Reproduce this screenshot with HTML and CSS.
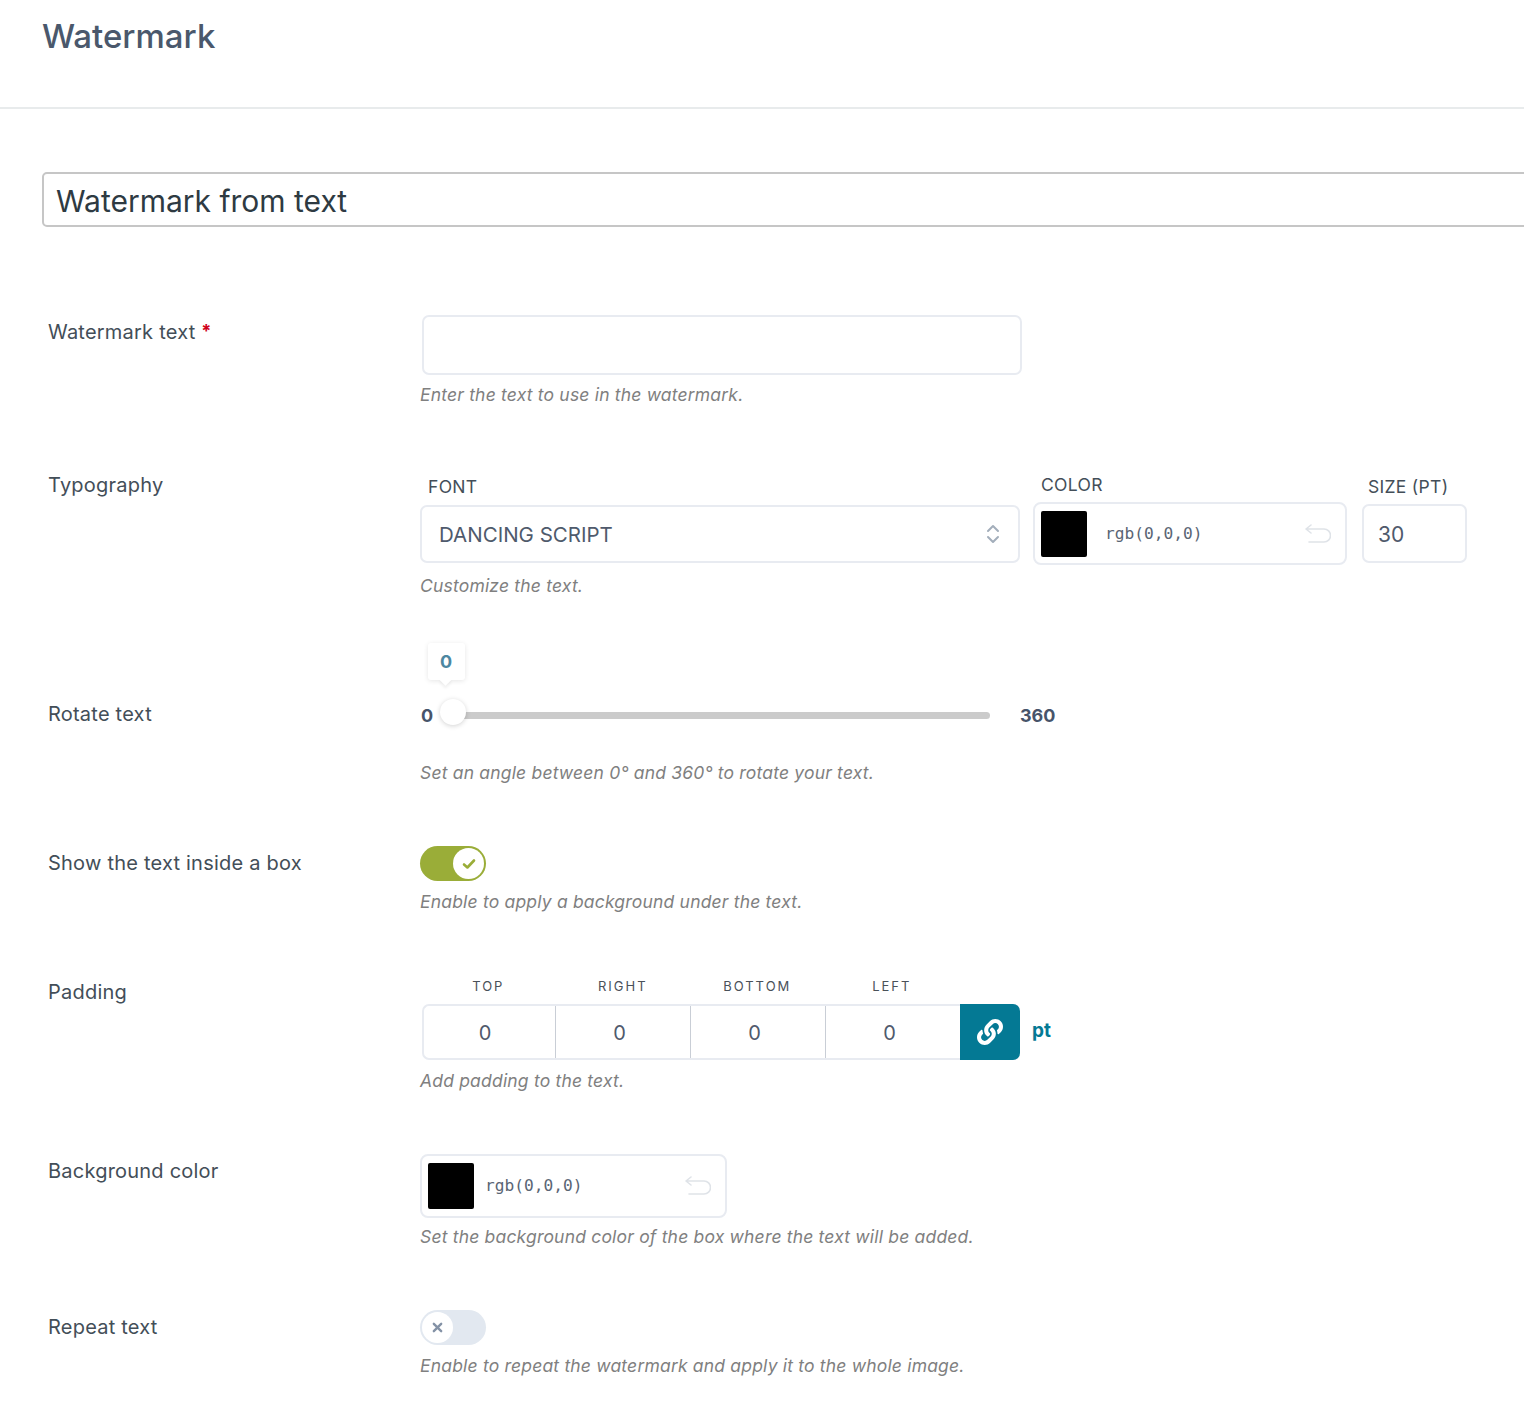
FILE: index.html
```html
<!DOCTYPE html>
<html lang="en">
<head>
<meta charset="utf-8">
<title>Watermark</title>
<link rel="stylesheet" href="styles.css">
</head>
<body>
<header class="page-header"><h1>Watermark</h1></header>
<main class="form">
  <input class="title-input" type="text" value="Watermark from text">

  <section class="row row-text">
    <div class="label">Watermark text <span class="req">*</span></div>
    <div class="body">
      <div class="text-box"></div>
      <p class="help help-text">Enter the text to use in the watermark.</p>
    </div>
  </section>

  <section class="row row-typo">
    <div class="label label-flush">Typography</div>
    <div class="body body-typo">
      <div class="typo-fields">
        <div class="field field-font">
          <div class="field-label">FONT</div>
          <div class="select">
            <span>DANCING SCRIPT</span>
            <svg class="chev" viewBox="0 0 14 22" width="14" height="22" fill="none" stroke="#a3aebb" stroke-width="2" stroke-linecap="round" stroke-linejoin="round"><path d="M2 8l5-5 5 5M2 14l5 5 5-5"/></svg>
          </div>
        </div>
        <div class="field field-color">
          <div class="field-label">COLOR</div>
          <div class="color-box color-box-wide">
            <span class="swatch"></span>
            <span class="color-value color-value-wide">rgb(0,0,0)</span>
            <svg class="undo" viewBox="0 0 26 20" width="26" height="20" fill="none" stroke="#dfe3e8" stroke-width="1.6" stroke-linecap="round" stroke-linejoin="round"><path d="M6 1L1 5l5 4M1 5h18a6 6 0 0 1 0 13H4"/></svg>
          </div>
        </div>
        <div class="field field-size">
          <div class="field-label">SIZE (PT)</div>
          <div class="size-box">30</div>
        </div>
      </div>
      <p class="help help-typo">Customize the text.</p>
    </div>
  </section>

  <section class="row row-rotate">
    <div class="label label-rotate">Rotate text</div>
    <div class="body">
      <div class="slider">
        <span class="slider-min">0</span>
        <div class="track">
          <div class="thumb"></div>
          <div class="bubble">0</div>
        </div>
        <span class="slider-max">360</span>
      </div>
      <p class="help help-rotate">Set an angle between 0° and 360° to rotate your text.</p>
    </div>
  </section>

  <section class="row row-box">
    <div class="label">Show the text inside a box</div>
    <div class="body">
      <div class="toggle toggle-on">
        <span class="knob"><svg viewBox="0 0 14 12" width="14" height="12" fill="none" stroke="#9aad38" stroke-width="2.6" stroke-linecap="round" stroke-linejoin="round"><path d="M2 6.5l3.4 3L12 2.5"/></svg></span>
      </div>
      <p class="help help-toggle">Enable to apply a background under the text.</p>
    </div>
  </section>

  <section class="row row-padding">
    <div class="label label-padding">Padding</div>
    <div class="body">
      <div class="side-labels">
        <span>TOP</span><span>RIGHT</span><span>BOTTOM</span><span>LEFT</span>
      </div>
      <div class="padding-line">
        <div class="padding-group">
          <div class="cell">0</div><div class="cell">0</div><div class="cell">0</div><div class="cell">0</div>
          <div class="link-btn">
            <svg viewBox="0 0 512 512" width="26" height="26" fill="#fff"><path d="M326.612 185.391c59.747 59.809 58.927 155.698.36 214.59-.11.12-.24.25-.36.37l-67.2 67.2c-59.27 59.27-155.699 59.262-214.96 0-59.27-59.26-59.27-155.7 0-214.96l37.106-37.106c9.84-9.84 26.786-3.3 27.294 10.606.648 17.722 3.826 35.527 9.69 52.721 1.986 5.822.567 12.262-3.783 16.612l-13.087 13.087c-28.026 28.026-28.905 73.66-1.155 101.96 28.024 28.579 74.086 28.749 102.325.51l67.2-67.19c28.191-28.191 28.073-73.757 0-101.83-3.701-3.694-7.429-6.564-10.341-8.569a16.037 16.037 0 0 1-6.947-12.606c-.396-10.567 3.348-21.456 11.698-29.806l21.054-21.055c5.521-5.521 14.182-6.199 20.584-1.731a152.482 152.482 0 0 1 20.522 17.197zM467.547 44.449c-59.261-59.262-155.69-59.27-214.96 0l-67.2 67.2c-.12.12-.25.25-.36.37-58.566 58.892-59.387 154.781.36 214.59a152.454 152.454 0 0 0 20.521 17.196c6.402 4.468 15.064 3.789 20.584-1.731l21.054-21.055c8.35-8.35 12.094-19.239 11.698-29.806a16.037 16.037 0 0 0-6.947-12.606c-2.912-2.005-6.64-4.875-10.341-8.569-28.073-28.073-28.191-73.639 0-101.83l67.2-67.19c28.239-28.239 74.3-28.069 102.325.51 27.75 28.3 26.872 73.934-1.155 101.96l-13.087 13.087c-4.35 4.35-5.769 10.79-3.783 16.612 5.864 17.194 9.042 34.999 9.69 52.721.509 13.906 17.454 20.446 27.294 10.606l37.106-37.106c59.271-59.259 59.271-155.699.001-214.959z"/></svg>
          </div>
        </div>
        <span class="unit">pt</span>
      </div>
      <p class="help help-toggle">Add padding to the text.</p>
    </div>
  </section>

  <section class="row row-bg">
    <div class="label">Background color</div>
    <div class="body">
      <div class="color-box color-box-small">
        <span class="swatch"></span>
        <span class="color-value">rgb(0,0,0)</span>
        <svg class="undo" viewBox="0 0 26 20" width="26" height="20" fill="none" stroke="#dfe3e8" stroke-width="1.6" stroke-linecap="round" stroke-linejoin="round"><path d="M6 1L1 5l5 4M1 5h18a6 6 0 0 1 0 13H4"/></svg>
      </div>
      <p class="help help-bg">Set the background color of the box where the text will be added.</p>
    </div>
  </section>

  <section class="row row-repeat">
    <div class="label">Repeat text</div>
    <div class="body">
      <div class="toggle toggle-off">
        <span class="knob"><svg viewBox="0 0 12 12" width="11" height="11" fill="none" stroke="#8492a6" stroke-width="2.6" stroke-linecap="round"><path d="M2 2l8 8M10 2l-8 8"/></svg></span>
      </div>
      <p class="help help-toggle">Enable to repeat the watermark and apply it to the whole image.</p>
    </div>
  </section>
</main>
</body>
</html>
```
FILE: styles.css
```css
* { box-sizing: border-box; }
html, body { margin: 0; padding: 0; background: #fff; overflow: hidden; }
body { width: 1524px; height: 1420px; font-family: Inter, "Liberation Sans", sans-serif; color: #3f4a54; }

.page-header { height: 109px; border-bottom: 2px solid #e8ebec; padding: 16px 0 0 42px; }
.page-header h1 { margin: 0; font-size: 33px; line-height: 40px; font-weight: 500; color: #4a586c; }

.form { padding-left: 42px; overflow: hidden; }
.title-input {
  display: block; width: 1560px; height: 55px; margin: 63px 0 0;
  padding: 2px 12px 0; border: 2px solid #c6c6c6; border-radius: 5px;
  font: 400 30px Inter, "Liberation Sans", sans-serif; color: #2e3a42; background: #fff; outline: none;
}

.row { display: grid; grid-template-columns: 372px 1fr; padding-left: 6px; }
.label { font-size: 20px; line-height: 24px; padding-top: 5px; color: #434e58; letter-spacing: 0.22px; }
.label-flush { padding-top: 0; }
.label-rotate { padding-top: 59px; }
.label-padding { padding-top: 2px; }
.req { color: #d0021b; font-weight: 700; position: relative; top: -2px; font-size: 18px; }

.help { margin: 0; font-size: 17.5px; line-height: 20px; font-style: italic; color: #808080; letter-spacing: 0.19px; }
.help-text { margin-top: 10px; }
.help-typo { margin-top: 11px; }
.help-rotate { margin-top: 36px; }
.help-toggle { margin-top: 11px; }
.help-bg { margin-top: 9px; }

.row-text { margin-top: 88px; }
.text-box { width: 600px; height: 60px; margin-left: 2px; border: 2px solid #e8ebf1; border-radius: 7px; }

.row-typo { margin-top: 68px; }
.body-typo { padding-top: 4px; }
.typo-fields { display: flex; align-items: flex-start; }
.field-label { font-size: 17.5px; line-height: 20px; color: #434e58; letter-spacing: 0.3px; margin-bottom: 7px; }
.field-font { width: 600px; }
.field-font .field-label { margin-left: 8px; margin-bottom: 8px; }
.field-color { width: 314px; margin: -2px 0 0 13px; }
.field-color .field-label { margin-left: 8px; }
.field-size { width: 105px; margin-left: 15px; }
.field-size .field-label { margin-left: 6px; }
.select {
  height: 58px; display: flex; align-items: center; justify-content: space-between;
  padding: 0 18px 0 17px; border: 2px solid #e8ebf1; border-radius: 7px;
  font-size: 20.5px; color: #4f5a6c;
}
.size-box {
  height: 59px; padding: 2px 14px 0; display: flex; align-items: center;
  border: 2px solid #e8ebf1; border-radius: 7px; font-size: 21px; color: #4f5a6c;
}

.color-box { display: flex; align-items: center; height: 64px; border: 2px solid #e8ebf1; border-radius: 8px; padding-left: 6px; }
.color-box-wide { height: 63px; }
.color-box-small { width: 307px; }
.swatch { flex: none; width: 46px; height: 46px; background: #000; border-radius: 2px; }
.color-value { margin-left: 11px; font: 400 16.2px/20px "DejaVu Sans Mono", "Liberation Mono", monospace; color: #5a6574; flex: 1; }
.color-value-wide { margin-left: 18px; }
.undo { flex: none; margin-right: 14px; }

.row-rotate { margin-top: 47px; }
.slider { display: flex; align-items: center; height: 24px; margin-top: 60px; width: 640px; }
.slider-min { width: 21px; margin-left: 1px; font-size: 18px; font-weight: 700; color: #47546a; text-align: left; }
.track { position: relative; width: 548px; height: 7px; background: #cbcbcb; border-radius: 4px; }
.slider-max { margin-left: 30px; font-size: 18px; font-weight: 700; color: #47546a; }
.thumb {
  position: absolute; left: -2px; top: -13px; width: 26px; height: 26px; border-radius: 50%;
  background: #fff; box-shadow: 0 1px 5px rgba(0,0,0,.18);
}
.bubble {
  position: absolute; left: -14px; top: -69px; width: 37px; height: 37px; padding-right: 1px;
  display: flex; align-items: center; justify-content: center;
  background: #fff; border-radius: 3px; box-shadow: 0 1px 5px rgba(0,0,0,.10);
  font-size: 18px; font-weight: 700; color: #4d87a1;
}
.bubble::after {
  content: ""; position: absolute; left: 13px; bottom: -4px; width: 9px; height: 9px;
  background: #fff; transform: rotate(45deg); box-shadow: 2px 2px 3px rgba(0,0,0,.06);
}

.row-box { margin-top: 63px; }
.toggle { position: relative; width: 66px; height: 35px; border-radius: 18px; }
.toggle-on { background: #9aad38; }
.toggle-off { background: #e2e8f0; }
.knob { position: absolute; top: 2px; width: 31px; height: 31px; border-radius: 50%; background: #fff; display: flex; align-items: center; justify-content: center; }
.toggle-on .knob { right: 2px; }
.toggle-off .knob { left: 2px; }

.row-padding { margin-top: 66px; }
.side-labels { display: flex; height: 26px; margin-left: 1px; font-size: 13px; line-height: 16px; letter-spacing: 2px; color: #4a5159; }
.side-labels span { width: 134.5px; text-align: center; }
.padding-line { display: flex; align-items: flex-start; margin-left: 2px; }
.padding-group { display: flex; width: 598px; height: 56px; border: 2px solid #e8ebf1; border-right: 0; border-radius: 7px; }
.cell { width: 135px; padding: 2px 7px 0 0; display: flex; align-items: center; justify-content: center; font-size: 20px; color: #4f5a6c; border-right: 1px solid #c9ced6; }
.cell:first-child { width: 132px; padding-right: 9px; }
.cell:nth-child(4) { width: 134px; border-right: 0; }
.link-btn { flex: 1; margin: -2px 0; background: #047994; border-radius: 0 7px 7px 0; display: flex; align-items: center; justify-content: center; }
.unit { margin: 15px 0 0 12px; font-size: 19px; line-height: 24px; font-weight: 700; color: #047994; }

.row-bg { margin-top: 63px; }
.row-repeat { margin-top: 63px; }
```
